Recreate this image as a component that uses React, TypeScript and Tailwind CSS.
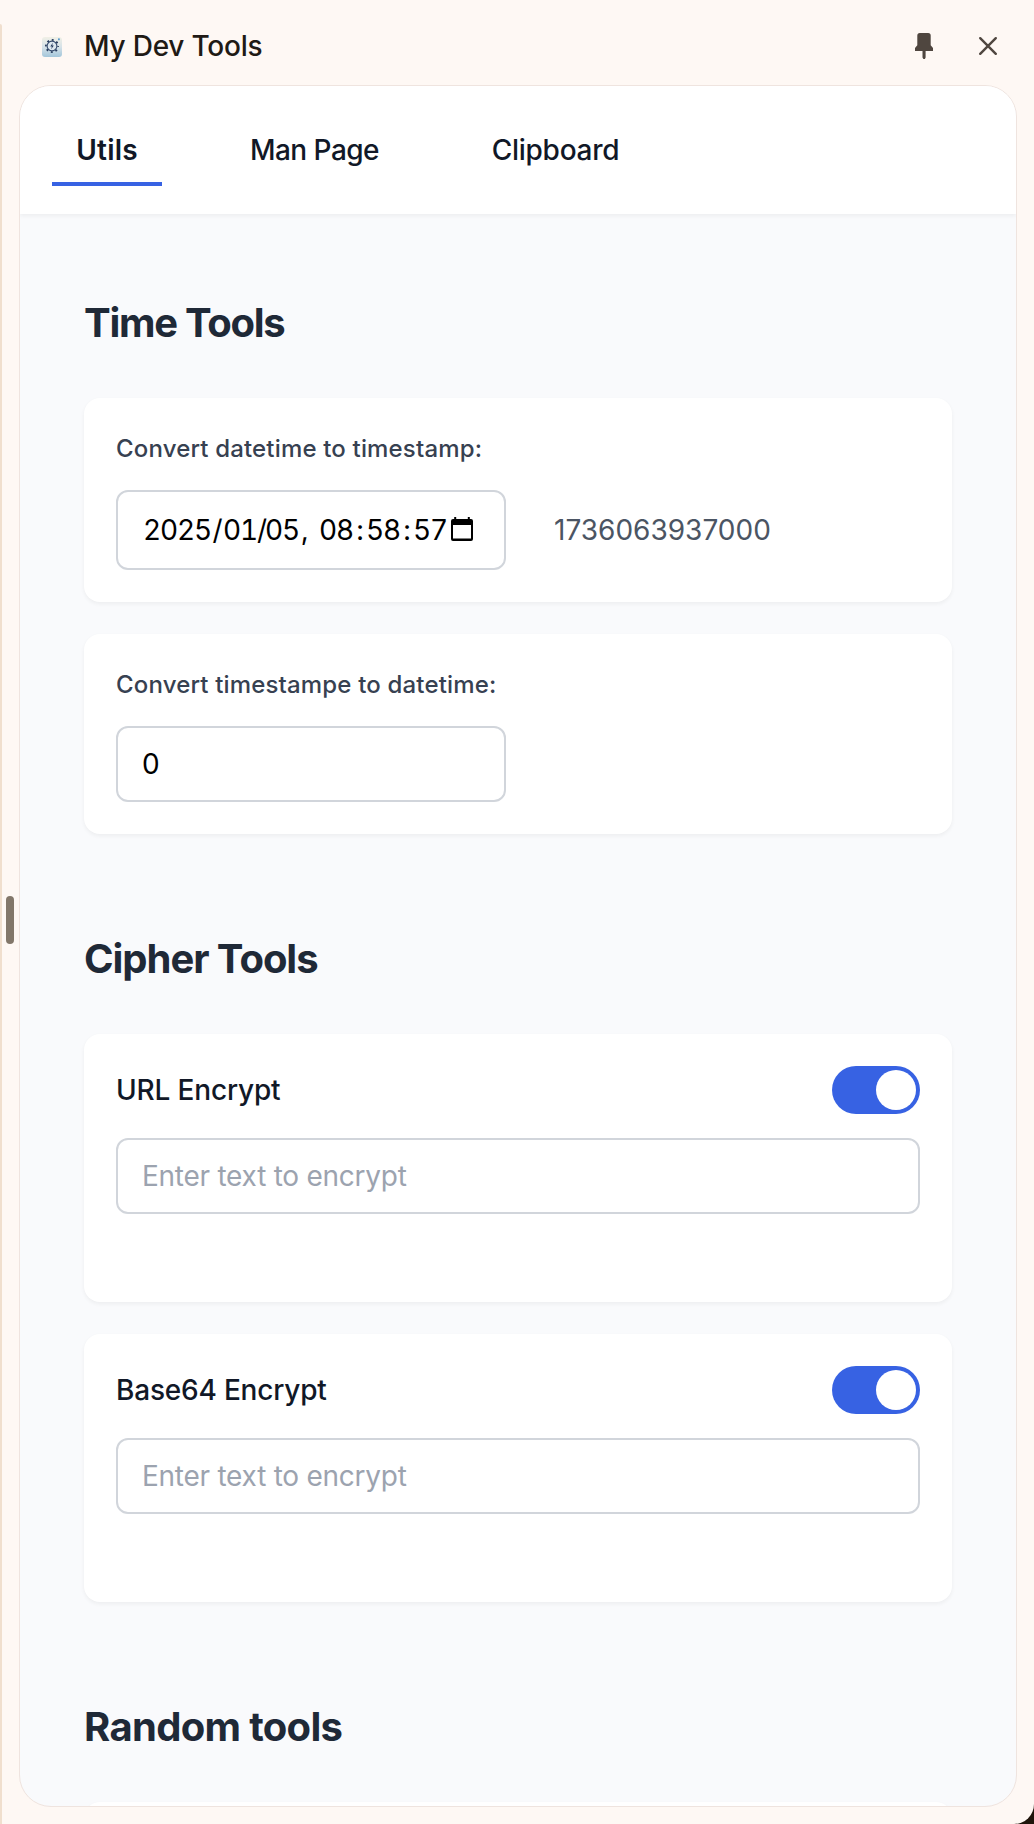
import { useState } from "react";
import type { ReactNode } from "react";

function AppIcon() {
  return (
    <svg width="20" height="20" viewBox="0 0 20 20" className="mt-0.5 shrink-0">
      <defs>
        <linearGradient id="tile" x1="0" y1="0" x2="0" y2="1">
          <stop offset="0" stopColor="#f1f0e6" />
          <stop offset="0.5" stopColor="#d6e2e8" />
          <stop offset="1" stopColor="#a3c6da" />
        </linearGradient>
      </defs>
      <rect width="20" height="20" rx="3" fill="url(#tile)" />
      <circle cx="10" cy="9" r="4.9" fill="#dde7ee" stroke="#34496b" strokeWidth="1.1" />
      <circle cx="10" cy="9" r="6.1" fill="none" stroke="#24395b" strokeWidth="1.7" strokeDasharray="1.9 2.89" strokeDashoffset="0.95" />
      <path d="M10.8 5.8 8.3 9.4h1.6l-.7 2.9 2.6-3.8h-1.6z" fill="#24395b" />
      <rect x="16" y="1.4" width="1.8" height="1.8" fill="#5c9ccb" />
    </svg>
  );
}

function PinIcon() {
  return (
    <svg width="18" height="26" viewBox="0 0 18 26" fill="#4f463f">
      <path d="M2.3 2.500a2.500 2.500 0 0 1 2.500-2.500h8.400a2.500 2.500 0 0 1 2.500 2.500v9.800l2.300 2.700v3H10.600v6.400L9.900 26H8.400l-.9-1.600V18H0v-3l2.300-2.700z" />
    </svg>
  );
}

function CloseIcon() {
  return (
    <svg width="20" height="20" viewBox="0 0 20 20" stroke="#4f463f" strokeWidth="2.4" strokeLinecap="round">
      <path d="M2.2 2.2 17.8 17.8M17.8 2.2 2.2 17.8" />
    </svg>
  );
}

function CalendarIcon() {
  return (
    <svg width="22" height="24" viewBox="0 0 22 24" className="mb-0.5 shrink-0">
      <path d="M3.2 0h2v2h11.6V0h2v2H20a2 2 0 0 1 2 2v18a2 2 0 0 1-2 2H2a2 2 0 0 1-2-2V4a2 2 0 0 1 2-2h1.200zM2 8v13.600h18V8z" fill="#000" fillRule="evenodd" />
    </svg>
  );
}

function Card({ children, className = "" }: { children?: ReactNode; className?: string }) {
  return (
    <div className={`rounded-[16px] bg-white px-8 shadow-[0_2px_4px_rgba(0,0,0,0.05)] ${className}`}>
      {children}
    </div>
  );
}

function Heading({ children, className }: { children: ReactNode; className: string }) {
  return <h2 className={`mb-[47px] pt-px text-[40px] leading-[56px] font-bold whitespace-nowrap text-[#1f2937] ${className}`}>{children}</h2>;
}

function FieldLabel({ children }: { children: ReactNode }) {
  return (
    <label className="mb-[23px] block pt-px text-[24px] leading-9 font-medium tracking-[0.007em] text-[#374151]">
      {children}
    </label>
  );
}

function DateField({ value, separator, className }: { value: string; separator?: string; className: string }) {
  return (
    <span className={`flex whitespace-nowrap ${className}`}>
      <span>{value}</span>
      {separator && <span className="flex-1 text-center">{separator}</span>}
    </span>
  );
}

function EncryptCard({ title, titleClass }: { title: string; titleClass: string }) {
  const [on, setOn] = useState(true);
  return (
    <Card className="h-[268px] pt-8">
      <div className="mb-6 flex h-12 items-center justify-between">
        <span className={`text-[28px] font-medium text-[#111827] ${titleClass}`}>{title}</span>
        <button
          role="switch"
          aria-checked={on}
          aria-label={title}
          onClick={() => setOn(!on)}
          className={`flex h-12 w-[88px] items-center rounded-full p-1 ${on ? "justify-end bg-[#3762e3]" : "justify-start bg-gray-200"}`}
        >
          <span className="size-10 rounded-full bg-white" />
        </button>
      </div>
      <input
        placeholder="Enter text to encrypt"
        className="h-[76px] w-full rounded-[12px] border-2 border-[#d1d5db] px-6 text-[28px] tracking-[-0.009em] outline-none placeholder:text-[#9ca3af]"
      />
    </Card>
  );
}

export default function App() {
  return (
    <div className="h-[1824px] w-[1034px] overflow-hidden bg-[#1f140b] font-['Inter',sans-serif]">
      <div className="relative flex h-full flex-col rounded-br-[20px] bg-[#fef8f4] pr-[17px] pb-[17px] pl-[19px]">
        <div className="absolute top-6 bottom-0 left-0 w-0.5 rounded-tr-[2px] bg-[#f0dfce]" />
        <div className="absolute top-[896px] left-[6px] h-12 w-2 rounded-full bg-[#82776a]" />

        <header className="flex h-[85px] shrink-0 items-center pt-[7px] pr-[19px] pl-[23px]">
          <AppIcon />
          <h1 className="ml-[22px] flex-1 text-[28px] font-medium tracking-[-0.008em] text-[#1f1a15]">My Dev Tools</h1>
          <PinIcon />
          <div className="ml-[45px]">
            <CloseIcon />
          </div>
        </header>

        <div className="flex min-h-0 flex-1 flex-col overflow-hidden rounded-[32px] border border-[#efe4df] bg-[#f9fafc]">
          <nav className="z-10 flex h-32 shrink-0 gap-16 bg-white pt-8 pl-8 text-[28px] leading-[64px] font-medium text-[#111827] shadow-[0_2px_4px_rgba(0,0,0,0.05)]">
            <a className="flex h-[68px] w-[110px] justify-center border-b-4 border-[#3762e3] font-semibold">
              <span className="tracking-[0.006em]">Utils</span>
            </a>
            <a className="flex h-[68px] w-[177px] justify-center whitespace-nowrap">
              <span className="tracking-[-0.019em]">Man Page</span>
            </a>
            <a className="flex h-[68px] w-[177px] justify-center whitespace-nowrap">
              <span className="tracking-[-0.01em]">Clipboard</span>
            </a>
          </nav>

          <main className="flex shrink-0 flex-col gap-24 pt-20 pr-16 pl-16">
            <section>
              <Heading className="tracking-[-0.032em]">Time Tools</Heading>
              <div className="flex flex-col gap-8">
                <Card className="h-[204px] pt-8">
                  <FieldLabel>Convert datetime to timestamp:</FieldLabel>
                  <div className="flex items-center">
                    <div className="flex h-20 w-[390px] items-center rounded-[12px] border-2 border-[#d1d5db] pl-[25px] text-[28px] text-black">
                      <div className="flex w-[308px] tracking-[-0.04em] tabular-nums">
                        <DateField value="2025" separator="/" className="w-[80px]" />
                        <DateField value="01" separator="/" className="w-[42px]" />
                        <DateField value="05" className="w-[36px]" />
                        <span className="w-[18px]">,</span>
                        <DateField value="08" separator=":" className="w-[47px]" />
                        <DateField value="58" separator=":" className="w-[47px]" />
                        <DateField value="57" className="w-[36px]" />
                      </div>
                      <CalendarIcon />
                    </div>
                    <span className="ml-12 text-[28px] text-[#4b5563]">1736063937000</span>
                  </div>
                </Card>
                <Card className="h-[200px] pt-8">
                  <FieldLabel>Convert timestampe to datetime:</FieldLabel>
                  <input
                    defaultValue="0"
                    className="h-[76px] w-[390px] rounded-[12px] border-2 border-[#d1d5db] px-6 text-[28px] text-black outline-none"
                  />
                </Card>
              </div>
            </section>

            <section>
              <Heading className="tracking-[-0.026em]">Cipher Tools</Heading>
              <div className="flex flex-col gap-8">
                <EncryptCard title="URL Encrypt" titleClass="tracking-[-0.006em]" />
                <EncryptCard title="Base64 Encrypt" titleClass="tracking-[-0.007em]" />
              </div>
            </section>

            <section>
              <Heading className="tracking-[-0.017em]">Random tools</Heading>
              <Card className="h-[204px]" />
            </section>
          </main>
        </div>
      </div>
    </div>
  );
}
